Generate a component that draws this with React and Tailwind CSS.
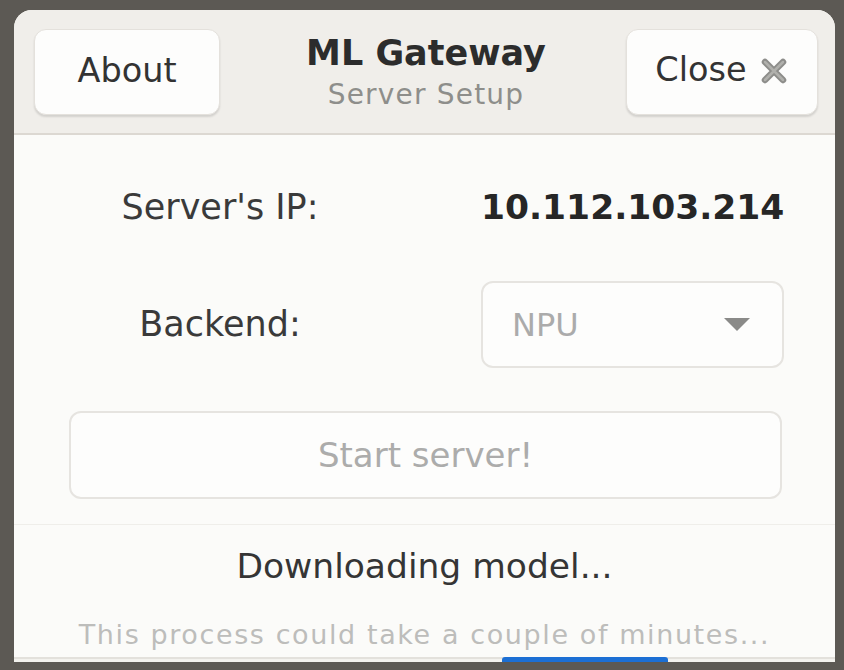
import React from "react";

const CloseIcon = () => (
  <svg width="30" height="30" viewBox="0 0 30 30" className="ml-3">
    <path
      d="M6 6 L24 24 M24 6 L6 24"
      stroke="#8d8d8a"
      strokeWidth="6.5"
      strokeLinecap="round"
    />
    <path
      d="M6 6 L24 24 M24 6 L6 24"
      stroke="#b0b0ac"
      strokeWidth="2.5"
      strokeLinecap="round"
    />
  </svg>
);

const App = () => {
  return (
    <div
      className="w-[844px] h-[670px] overflow-hidden bg-[#5c5954] pt-[10px] pl-[14px] pr-[9px]"
      style={{ fontFamily: '"DejaVu Sans", sans-serif' }}
    >
      <div className="h-[652px] flex flex-col rounded-t-[18px] overflow-hidden bg-[#fbfbf9]">
        {/* Header bar */}
        <div className="h-[125px] shrink-0 flex items-center justify-between pl-[20px] pr-[17px] bg-[#f0eeea] border-b-2 border-[#dcd8d2]">
          <button className="w-[186px] h-[86px] rounded-[12px] bg-[#fdfdfc] border border-[#e4e1dc] shadow-[0_2px_2px_rgba(0,0,0,0.12)] text-[33.5px] text-[#333333]">
            About
          </button>
          <div className="flex flex-col items-center pt-[2px] ml-[6px]">
            <div className="text-[35px] font-bold text-[#2c2c2c] leading-[40px]">
              ML Gateway
            </div>
            <div className="text-[28px] text-[#8e8e8b] leading-[36px] tracking-[1.2px] mt-[4px]">
              Server Setup
            </div>
          </div>
          <button className="w-[192px] h-[86px] rounded-[12px] bg-[#fdfdfc] border border-[#e4e1dc] shadow-[0_2px_2px_rgba(0,0,0,0.12)] text-[33.5px] text-[#333333] flex items-center justify-center pb-[2px]">
            Close
            <CloseIcon />
          </button>
        </div>

        {/* Form */}
        <div className="pl-[55px] pr-[53px] pt-[29px]">
          <div className="grid grid-cols-[302px_1fr] gap-x-[110px] gap-y-[30px] items-center">
            <div className="h-[87px] flex items-center justify-center text-[35px] text-[#3a3a3a]">
              Server's IP:
            </div>
            <div className="h-[87px] flex items-center justify-end text-[34.5px] font-bold text-[#262626]">
              10.112.103.214
            </div>
            <div className="h-[87px] flex items-center justify-center text-[35px] text-[#3a3a3a]">
              Backend:
            </div>
            <div className="h-[87px] rounded-[12px] border-2 border-[#e6e4e0] bg-[#fdfdfc] flex items-center justify-between pl-[29px] pr-[32px]">
              <span className="text-[32px] text-[#ababab]">NPU</span>
              <svg width="26" height="14" viewBox="0 0 26 14">
                <path d="M0 0 H26 L13 13 Z" fill="#8a8a88" />
              </svg>
            </div>
          </div>
          <button className="mt-[43px] w-full h-[88px] rounded-[12px] border-2 border-[#e6e4e0] bg-[#fdfdfc] text-[34px] text-[#acacab]">
            Start server!
          </button>
        </div>

        {/* Status */}
        <div className="mt-[25px] border-t border-[#efeeea] flex flex-col items-center">
          <div className="h-[82px] flex items-center text-[34.5px] text-[#353535] pt-[2px]">
            Downloading model...
          </div>
          <div className="h-[50px] flex items-center text-[27px] text-[#bdbdbb] tracking-[1.6px] pt-[6px]">
            This process could take a couple of minutes...
          </div>
        </div>

        {/* Bottom edge */}
        <div className="mt-auto h-[10px] border-t-2 border-[#e3e1dc] bg-[#f3f2ee] relative">
          <div className="absolute left-[488px] top-[-2px] w-[166px] h-[9px] rounded-t-[3px] bg-[#1c6fd4]" />
        </div>
      </div>
    </div>
  );
};

export default App;
